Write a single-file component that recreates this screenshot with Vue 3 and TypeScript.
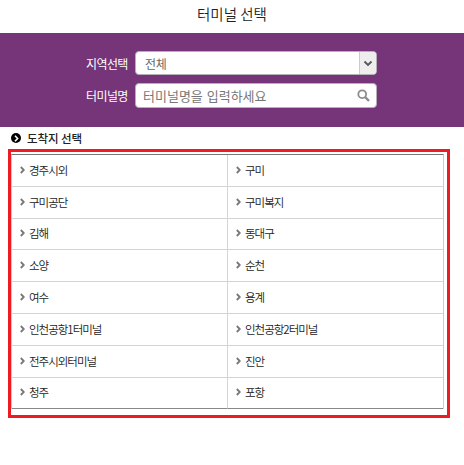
<script setup lang="ts">
const terminals: string[] = [
  '경주시외', '구미', '구미공단', '구미복지', '김해', '동대구', '소양', '순천',
  '여수', '용계', '인천공항1터미널', '인천공항2터미널', '전주시외터미널', '진안', '청주', '포항',
]
</script>

<template>
  <div class="page">
    <header class="title">터미널 선택</header>
    <section class="search">
      <div class="field">
        <label class="label">지역선택</label>
        <div class="control select">
          <span class="value">전체</span>
          <span class="arrow">
            <svg width="10" height="7" viewBox="0 0 10 7"><path d="M1.5 1.5 L5 5 L8.5 1.5" fill="none" stroke="#555" stroke-width="1.8" /></svg>
          </span>
        </div>
      </div>
      <div class="field">
        <label class="label">터미널명</label>
        <div class="control input">
          <span class="placeholder">터미널명을 입력하세요</span>
          <svg class="glass" width="13" height="13" viewBox="0 0 13 13"><circle cx="5.2" cy="5.2" r="3.9" fill="none" stroke="#8c8c8c" stroke-width="1.8" /><path d="M8.2 8.2 L12 12" stroke="#8c8c8c" stroke-width="2.4" /></svg>
        </div>
      </div>
    </section>
    <h2 class="sub">
      <span class="bullet">
        <svg width="5" height="7" viewBox="0 0 5 7"><path d="M1 .8 L3.6 3.5 L1 6.2" fill="none" stroke="#fff" stroke-width="1.6" /></svg>
      </span>
      <span class="subtext">도착지 선택</span>
    </h2>
    <div class="redbox">
      <ul class="grid">
        <li v-for="t in terminals" :key="t" class="cell">
          <svg class="chev" width="5" height="8" viewBox="0 0 5 8"><path d="M.8 1 L3.8 4 L.8 7" fill="none" stroke="#777" stroke-width="1.8" /></svg>
          <span class="name">{{ t }}</span>
        </li>
      </ul>
    </div>
  </div>
</template>

<style>
html, body { margin: 0; background: #fff; }
</style>

<style scoped>
.page {
  width: 464px;
  height: 465px;
  overflow: hidden;
  font-family: "Noto Sans CJK KR", "Noto Sans", sans-serif;
  color: #222;
}
.title {
  height: 33px;
  line-height: 28px;
  text-align: center;
  font-size: 14.5px;
  font-weight: 350;
  color: #222;
}
.search {
  height: 94px;
  box-sizing: border-box;
  background: #763578;
  padding-top: 18px;
  display: flex;
  flex-direction: column;
  gap: 8px;
}
.field {
  display: flex;
  align-items: center;
  padding-left: 86px;
  gap: 8px;
}
.label {
  width: 41px;
  color: #fff;
  font-size: 12px;
  white-space: nowrap;
  letter-spacing: -0.6px;
}
.control {
  width: 242px;
  box-sizing: border-box;
  background: #fff;
  border: 1px solid #b5b0b8;
  border-radius: 4px;
  display: flex;
  align-items: center;
  font-size: 12px;
  color: #666;
}
.select { height: 24px; }
.input { height: 25px; }
.value { flex: 1; padding-left: 9px; letter-spacing: -0.2px; }
.arrow {
  width: 17px;
  height: 100%;
  box-sizing: border-box;
  border-left: 1px solid #ccc;
  background: #eee;
  border-radius: 0 3px 3px 0;
  display: flex;
  align-items: center;
  justify-content: center;
}
.placeholder { flex: 1; padding-left: 7px; font-size: 13px; word-spacing: 1px; color: #777; }
.glass { margin-right: 6px; }
.sub {
  margin: 0;
  height: 22px;
  padding-left: 11px;
  display: flex;
  align-items: center;
  gap: 6px;
  font-size: 11.5px;
  font-weight: 500;
  color: #222;
}
.subtext { letter-spacing: -0.1px; }
.bullet {
  width: 10px;
  height: 10px;
  background: #000;
  border-radius: 50%;
  display: flex;
  align-items: center;
  justify-content: center;
}
.redbox {
  width: 442px;
  height: 269px;
  box-sizing: border-box;
  margin-left: 8px;
  border: 3px solid #ed1c24;
  padding: 2px 3px 0 0;
}
.grid {
  list-style: none;
  margin: 0;
  padding: 0;
  display: grid;
  grid-template-columns: 216px 215px;
  grid-auto-rows: 31.8px;
  box-sizing: border-box;
  border-top: 1px solid #777;
  border-left: 1px solid #ccc;
  border-right: 1px solid #ccc;
}
.cell {
  display: flex;
  align-items: center;
  gap: 4px;
  padding-left: 8px;
  padding-bottom: 1px;
  font-size: 11.5px;
  font-weight: 350;
  color: #222;
  box-sizing: border-box;
  border-bottom: 1px solid #d4d4d4;
}
.name { letter-spacing: -1px; }
.cell:nth-child(odd) { border-right: 1px solid #d4d4d4; }
.cell:nth-last-child(-n + 2) { border-bottom-color: #888; }
</style>
